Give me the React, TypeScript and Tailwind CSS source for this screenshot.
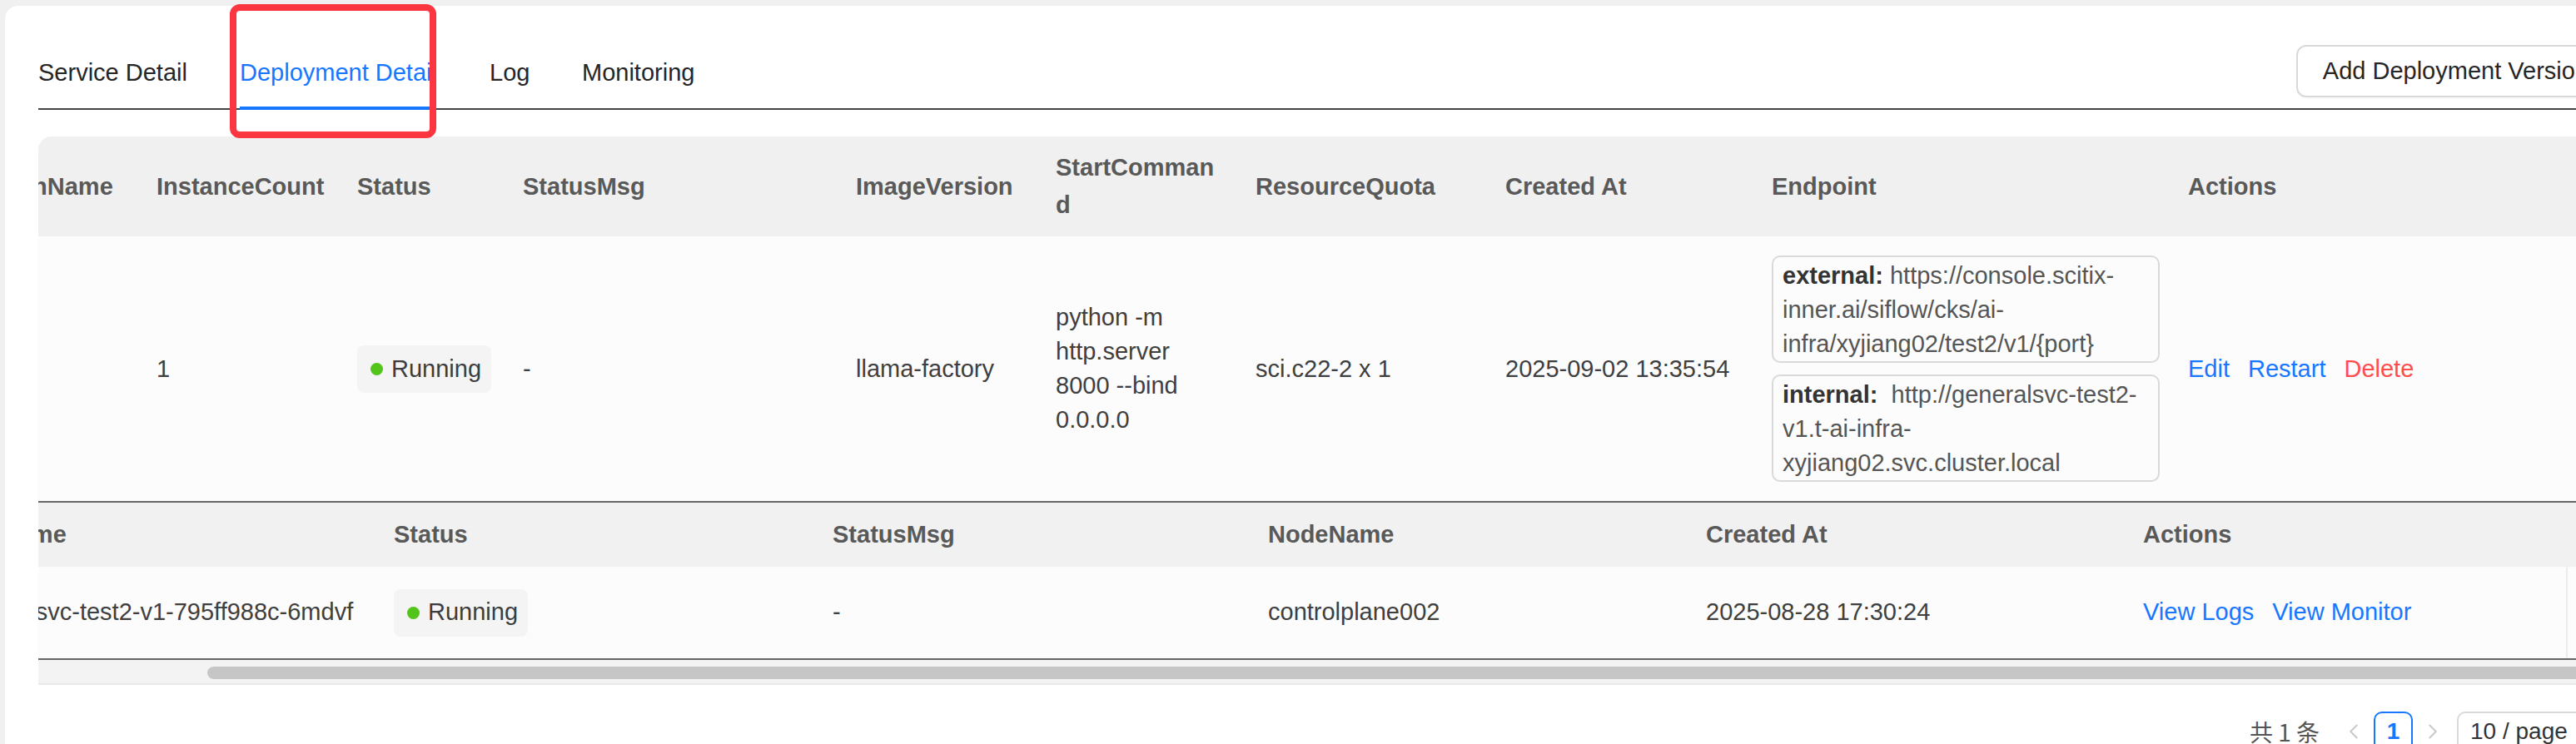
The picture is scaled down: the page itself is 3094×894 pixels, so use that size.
import { ChevronDown, ChevronLeft, ChevronRight } from 'lucide-react'

const mainCols = [
    { title: 'VersionName', w: 'w-[236px] whitespace-nowrap' },
    { title: 'InstanceCount', w: 'w-[241px] whitespace-nowrap' },
    { title: 'Status', w: 'w-[199px] whitespace-nowrap' },
    { title: 'StatusMsg', w: 'w-[400px] whitespace-nowrap' },
    { title: 'ImageVersion', w: 'w-[240px] whitespace-nowrap' },
    { title: 'StartCommand', w: 'w-[240px] pr-[21px] break-all' },
    { title: 'ResourceQuota', w: 'w-[300px] whitespace-nowrap' },
    { title: 'Created At', w: 'w-[320px] whitespace-nowrap' },
    { title: 'Endpoint', w: 'w-[500px] whitespace-nowrap' },
    { title: 'Actions', w: 'flex-1 whitespace-nowrap' },
]

const podCols = [
    { title: 'PodName', w: 'w-[527px]' },
    { title: 'Status', w: 'w-[527px]' },
    { title: 'StatusMsg', w: 'w-[523px]' },
    { title: 'NodeName', w: 'w-[526px]' },
    { title: 'Created At', w: 'w-[525px]' },
    { title: 'Actions', w: 'w-[532px]' },
]

const tabs = [
    { label: 'Service Detail', w: 'w-[177px]' },
    { label: 'Deployment Detail', w: 'w-[235px]', active: true },
    { label: 'Log', w: 'w-[46px]' },
    { label: 'Monitoring', w: 'w-[137px]' },
]

function StatusTag() {
    return (
        <span className="inline-flex items-center h-[57px] pl-[16px] pr-[12px] rounded-[8px] bg-[#f4f4f4] text-[#3d3d3d]">
            <span className="w-[15px] h-[15px] rounded-full bg-[#52c41a] mr-[10px]" />
            Running
        </span>
    )
}

function EndpointBox({ label, lines }: { label: string; lines: string[] }) {
    return (
        <div className="w-[466px] border-2 border-[#d9d9d9] rounded-[10px] px-[11px] pt-[2px] leading-[41px]">
            {lines.map((l, i) => (
                <div key={i} className="whitespace-nowrap">
                    {i === 0 && <span className="font-bold text-[#333]">{label}</span>}
                    <span className="text-[#555]">{l}</span>
                </div>
            ))}
        </div>
    )
}

export default function App() {
    return (
        <div className="relative w-[3094px] h-[894px] overflow-hidden bg-[#f0f0f0] pt-[7px] pl-[6px] font-['Liberation_Sans','Noto_Sans_CJK_SC',sans-serif] text-[29px]">
            <div className="w-[3175px] h-[900px] bg-white rounded-tl-[16px] px-[40px]">

                {/* tabs */}
                <div className="flex items-end h-[125px] border-b-2 border-[#444]">
                    <div className="flex gap-[65px]">
                        {tabs.map((t) => (
                            <div key={t.label} className={`relative shrink-0 pb-[25px] leading-[36px] whitespace-nowrap ${t.w}`}>
                                <span className={t.active ? 'text-[#1677ff]' : 'text-[#262626]'}>{t.label}</span>
                                {t.active && <span className="absolute left-0 right-0 bottom-[-2px] h-[4px] bg-[#1677ff]" />}
                            </div>
                        ))}
                    </div>
                    <button className="ml-auto self-start mt-[47px] h-[63px] px-[30px] border-2 border-[#d9d9d9] rounded-[12px] bg-white text-[#262626] whitespace-nowrap shadow-[0_2px_0_rgba(0,0,0,0.02)]">
                        Add Deployment Version
                    </button>
                </div>

                {/* table */}
                <div className="mt-[32px] overflow-hidden rounded-tl-[16px]">
                    <div className="flex items-center h-[120px] bg-[#f0f0f0] -ml-[118px] font-bold text-[#595959] leading-[45px]">
                        {mainCols.map((c) => (
                            <div key={c.title} className={`shrink-0 px-6 ${c.w}`}>{c.title}</div>
                        ))}
                    </div>

                    <div className="flex items-center h-[318px] bg-[#fcfcfc] -ml-[118px] text-[#3f3f3f] leading-[41px]">
                        <div className="shrink-0 w-[236px] px-6" />
                        <div className="shrink-0 w-[241px] px-6">1</div>
                        <div className="shrink-0 w-[199px] px-6"><StatusTag /></div>
                        <div className="shrink-0 w-[400px] px-6">-</div>
                        <div className="shrink-0 w-[240px] px-6">llama-factory</div>
                        <div className="shrink-0 w-[240px] px-6 whitespace-nowrap">
                            <div>python -m</div>
                            <div>http.server</div>
                            <div>8000 --bind</div>
                            <div>0.0.0.0</div>
                        </div>
                        <div className="shrink-0 w-[300px] px-6 whitespace-nowrap">sci.c22-2 x 1</div>
                        <div className="shrink-0 w-[320px] px-6 whitespace-nowrap">2025-09-02 13:35:54</div>
                        <div className="shrink-0 w-[500px] px-6 flex flex-col gap-[14px]">
                            <EndpointBox
                                label="external: "
                                lines={['https://console.scitix-', 'inner.ai/siflow/cks/ai-', 'infra/xyjiang02/test2/v1/{port}']}
                            />
                            <EndpointBox
                                label={'internal:\u00a0\u00a0'}
                                lines={['http://generalsvc-test2-', 'v1.t-ai-infra-', 'xyjiang02.svc.cluster.local']}
                            />
                        </div>
                        <div className="flex-1 px-6 flex gap-[22px] whitespace-nowrap">
                            <span className="text-[#1677ff]">Edit</span>
                            <span className="text-[#1677ff]">Restart</span>
                            <span className="text-[#ff4d4f]">Delete</span>
                        </div>
                    </div>

                    {/* expanded pods */}
                    <div className="border-t-2 border-[#666]">
                        <div className="flex items-center h-[77px] bg-[#f1f1f1] -ml-[124px] font-bold text-[#595959]">
                            {podCols.map((c) => (
                                <div key={c.title} className={`shrink-0 px-6 whitespace-nowrap ${c.w}`}>{c.title}</div>
                            ))}
                            <div className="flex-1" />
                        </div>
                        <div className="flex items-center h-[112px] bg-[#fcfcfc] -ml-[124px] border-b-2 border-[#666] text-[#3f3f3f] whitespace-nowrap">
                            <div className="shrink-0 w-[527px] px-6 overflow-hidden">generalsvc-test2-v1-795ff988c-6mdvf</div>
                            <div className="shrink-0 w-[527px] px-6"><StatusTag /></div>
                            <div className="shrink-0 w-[523px] px-6">-</div>
                            <div className="shrink-0 w-[526px] px-6">controlplane002</div>
                            <div className="shrink-0 w-[525px] px-6">2025-08-28 17:30:24</div>
                            <div className="shrink-0 w-[532px] px-6 flex gap-[22px]">
                                <span className="text-[#1677ff]">View Logs</span>
                                <span className="text-[#1677ff]">View Monitor</span>
                            </div>
                            <div className="flex-1 self-stretch border-l-2 border-[#ececec]" />
                        </div>
                    </div>

                    {/* scrollbar */}
                    <div className="h-[30px] bg-[#f3f3f3] border-b-2 border-[#e8e8e8] pt-[8px]">
                        <div className="ml-[203px] h-[15px] rounded-full bg-[#c6c6c6]" />
                    </div>
                </div>

                {/* pagination */}
                <div className="mt-[32px] flex items-center justify-end h-[48px]">
                    <span className="mr-[17px] text-[28px] text-[#555] font-['Noto_Sans_CJK_SC',sans-serif] whitespace-nowrap">共 1 条</span>
                    <span className="w-[48px] h-[48px] flex items-center justify-center text-[#c8c8c8]">
                        <ChevronLeft size={30} strokeWidth={1.5} />
                    </span>
                    <span className="w-[47px] h-[48px] flex items-center justify-center border-2 border-[#1677ff] rounded-[10px] text-[28px] text-[#1677ff] font-bold">1</span>
                    <span className="w-[48px] h-[48px] flex items-center justify-center text-[#c8c8c8]">
                        <ChevronRight size={30} strokeWidth={1.5} />
                    </span>
                    <div className="ml-[5px] w-[190px] h-[48px] flex items-center border-2 border-[#d9d9d9] rounded-[10px] pl-[14px] pr-[14px] text-[28px] text-[#333] whitespace-nowrap">
                        <span>10 / page</span>
                        <ChevronDown size={24} className="ml-auto text-[#bbb]" />
                    </div>
                </div>
            </div>

            {/* red annotation box */}
            <div className="absolute left-[276px] top-[5px] w-[248px] h-[161px] border-[8px] border-[#fb3640] rounded-[12px] pointer-events-none" />
        </div>
    )
}
